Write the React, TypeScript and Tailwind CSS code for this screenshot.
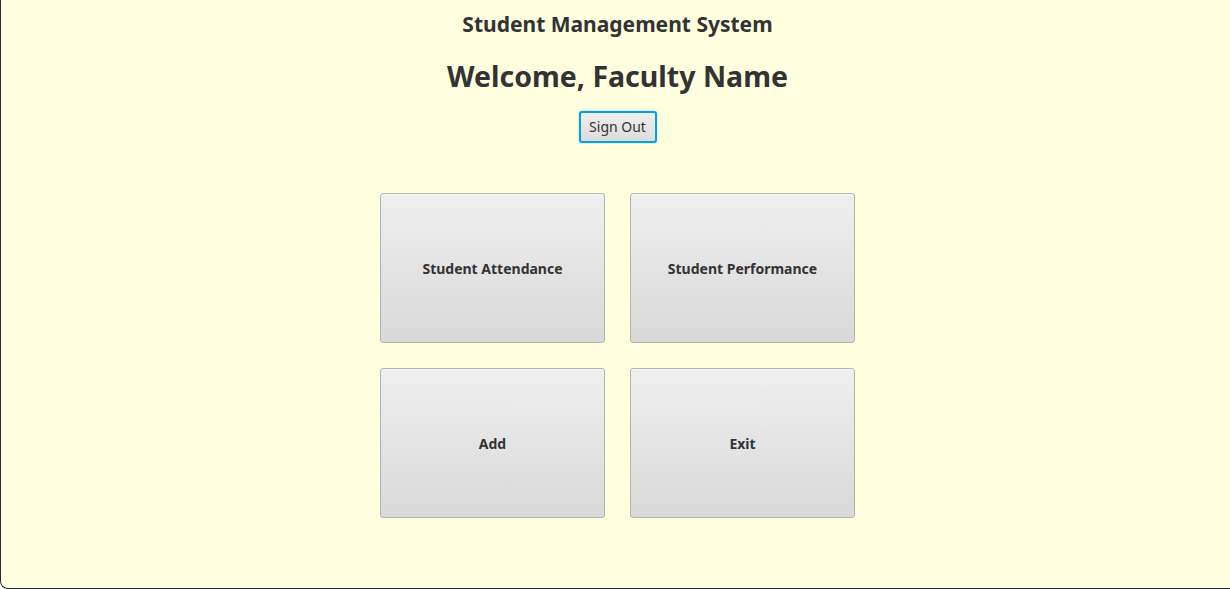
export default function App() {
  const tiles = ["Student Attendance", "Student Performance", "Add", "Exit"];

  return (
    <div
      className="h-[589px] w-full overflow-hidden rounded-bl-[8px] border-b border-l border-[#2b2b2b] bg-[#ffffe0] text-[#333333]"
      style={{ fontFamily: '"Noto Sans", "Open Sans", sans-serif' }}
    >
      <div className="flex flex-col items-center pl-[4px]">
        <h1 className="mt-[8px] text-[21px] font-bold leading-[32px]">Student Management System</h1>
        <h2 className="mt-[16px] text-[28.5px] font-bold leading-[40px]">Welcome, Faculty Name</h2>
        <button className="mt-[15px] h-[32px] w-[78px] rounded-[3px] border-2 border-[#0a9fd8] bg-gradient-to-b from-[#f0f0f0] to-[#dcdcdc] text-[14px] leading-none shadow-[0_0_2px_#6fd0f5]">
          Sign Out
        </button>

        <div className="mt-[50px] grid grid-cols-[225px_225px] gap-[25px]">
          {tiles.map((t) => (
            <button
              key={t}
              className="flex h-[150px] items-center justify-center rounded-[3px] border border-[#b4b4b4] bg-gradient-to-b from-[#efefef] to-[#d9d9d9] text-[14px] font-bold shadow-[inset_0_1px_0_#f8f8f8]"
            >
              {t}
            </button>
          ))}
        </div>
      </div>
    </div>
  );
}
